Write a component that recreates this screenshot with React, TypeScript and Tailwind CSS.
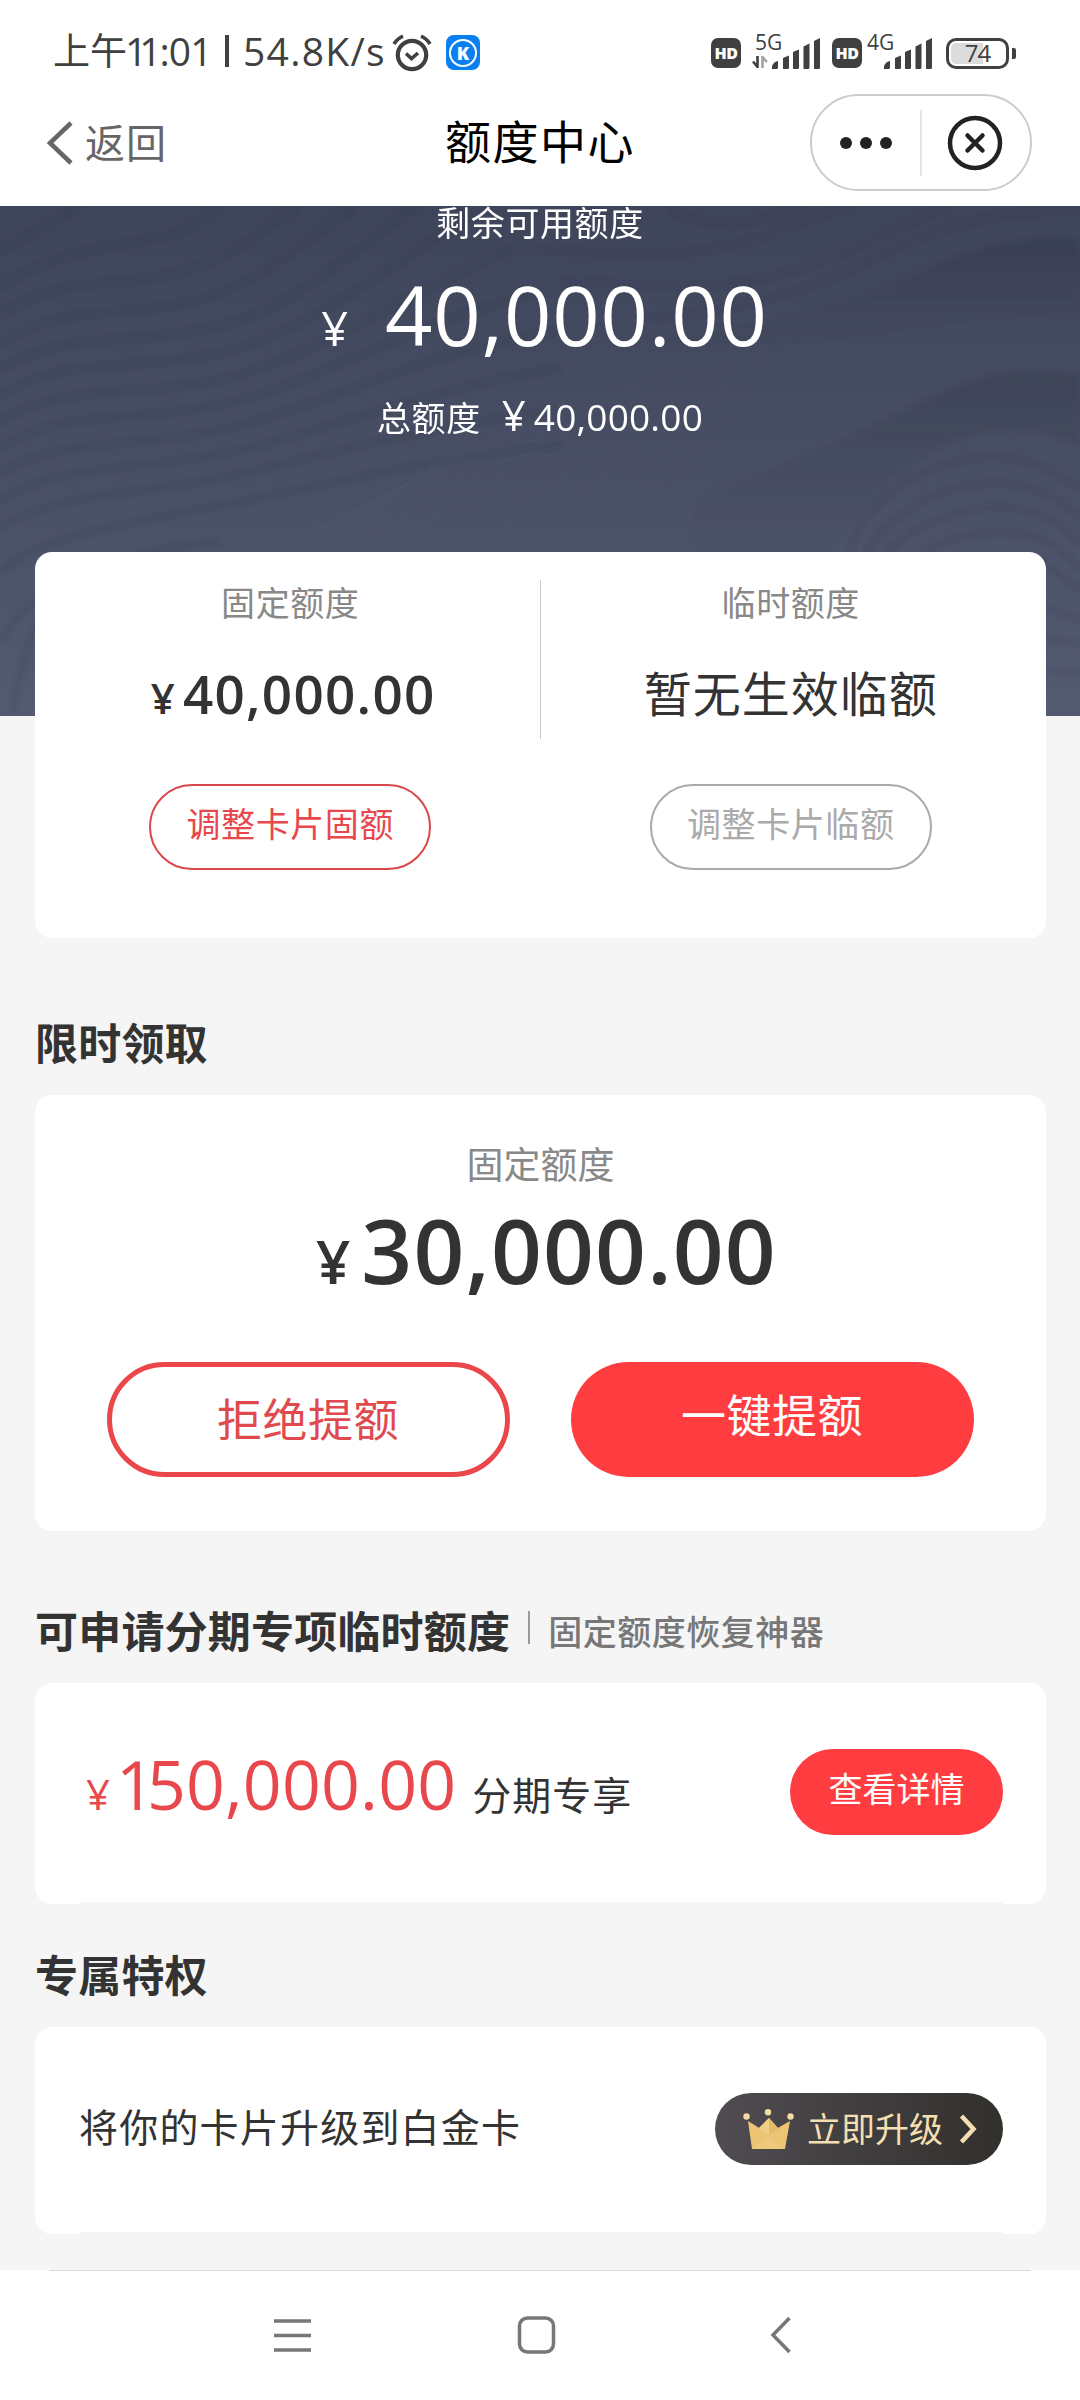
import type { ReactNode } from "react";
import clsx from "clsx";

const leftWaves = [
  "M0 46 C30 26 55 18 78 0",
  "M0 81 C60 40 120 42 175 28 C195 22 205 12 214 0",
  "M0 109 C60 68 115 84 180 66 C235 50 265 24 298 0",
  "M0 137 C60 98 120 112 190 96 C260 80 300 38 354 0",
  "M0 164 C60 124 130 140 210 122 C290 106 340 54 417 0",
  "M0 190 C60 150 130 166 215 148 C300 130 370 74 470 10",
  "M0 216 C60 176 130 192 220 174 C310 154 390 94 510 44",
  "M0 242 C60 202 130 218 225 198 C320 176 400 120 540 86",
  "M0 268 C60 230 130 244 230 222 C330 198 410 150 560 124",
  "M0 294 C60 256 130 268 240 244 C340 222 420 184 560 162",
  "M0 322 C60 284 130 292 240 268 C340 246 430 218 560 204",
  "M0 366 C40 330 130 316 240 296 C340 276 430 252 560 240",
  "M0 436 C30 380 100 346 220 336",
  "M12 510 C20 450 40 400 70 370",
];

const rightWaves = [
  "M540 44 C620 46 700 58 780 24 C810 12 830 6 850 0",
  "M560 76 C640 76 720 92 810 60 C880 34 920 10 950 0",
  "M640 112 C740 108 820 82 900 40 C950 16 1000 6 1080 4",
  "M670 6 C710 22 760 20 800 0",
  "M850 346 C860 290 940 246 1005 252 C1045 256 1066 274 1080 284",
  "M866 346 C890 306 950 272 1010 278 C1046 282 1066 300 1080 312",
  "M886 346 C920 316 970 296 1015 302 C1050 308 1066 326 1080 338",
  "M920 346 C960 326 1000 322 1030 330 C1056 336 1070 352 1080 364",
  "M1040 356 L1080 384",
  "M1040 400 L1080 414",
  "M1040 432 L1080 438",
  "M1040 464 L1080 466",
];

const fineWaves = Array.from({ length: 15 }, (_, i) => i);

function HeroWaves() {
  return (
    <svg className="absolute inset-0 h-full w-full" viewBox="0 0 1080 510" fill="none">
      <defs>
        <linearGradient id="ridge" x1="0" y1="0" x2="0" y2="1">
          <stop offset="0" stopColor="#363c50" stopOpacity="0.7" />
          <stop offset="1" stopColor="#3f4559" stopOpacity="0" />
        </linearGradient>
        <filter id="soft" x="-5%" y="-5%" width="110%" height="110%">
          <feGaussianBlur stdDeviation="2" />
        </filter>
      </defs>
      <g filter="url(#soft)">
        <path
          d="M640 136 C760 128 860 94 950 54 C1000 34 1040 32 1080 35 V110 C980 90 860 150 640 136Z"
          fill="url(#ridge)"
        />
        <path
          d="M700 292 C800 260 900 206 960 180 C1010 160 1050 166 1080 170 V240 C980 190 880 260 830 346 H690Z"
          fill="url(#ridge)"
          opacity="0.6"
        />
      </g>
      <g filter="url(#soft)" strokeWidth="4">
        {leftWaves.map((d) => (
          <path key={d} d={d} stroke="#343b50" strokeOpacity="0.26" />
        ))}
        {rightWaves.map((d) => (
          <path key={d} d={d} stroke="#383e55" strokeOpacity="0.2" />
        ))}
      </g>
      {fineWaves.map((i) => (
        <path
          key={i}
          d={`M${250 + i * 9} ${346 - i * 3} C${400 + i * 8} ${330 - i * 10} ${480 + i * 8} ${290 - i * 7} ${700 + i * 5} ${270 - i * 9}`}
          stroke="#6a7093"
          strokeOpacity="0.08"
          strokeWidth="1.5"
        />
      ))}
    </svg>
  );
}

function AlarmIcon() {
  return (
    <svg className="h-[38px] w-[40px]" viewBox="0 0 40 38" fill="none" stroke="#404040">
      <circle cx="20" cy="21" r="14.2" strokeWidth="4.2" />
      <path d="M14 19.5 L19.5 24.5 L26 19" strokeWidth="3.6" />
      <path d="M2 10 Q5.5 4.5 11 2.2 M38 10 Q34.5 4.5 29 2.2" strokeWidth="3.6" />
    </svg>
  );
}

function SignalBars() {
  return (
    <svg className="h-[31px] w-[48px]" viewBox="0 0 48 31" fill="#404040">
      <path d="M0 31 V28 Q2 23.5 6 23 V29.5 Q6 31 4.5 31Z" />
      <path d="M11 31 V20 L17 17.5 V29.5 Q17 31 15.5 31Z" />
      <path d="M21 31 V14 L27 11.5 V29.5 Q27 31 25.5 31Z" />
      <path d="M31.5 31 V8.5 L37.5 5.5 V29.5 Q37.5 31 36 31Z" />
      <path d="M42 31 V3 L48 0 V29.5 Q48 31 46.5 31Z" />
    </svg>
  );
}

function HdBadge() {
  return (
    <span className="flex h-[30px] w-[30px] items-center justify-center rounded-[7px] bg-[#404040] text-[16px] leading-none font-extrabold tracking-tight text-white">
      HD
    </span>
  );
}

function StatusBar() {
  return (
    <div className="flex h-[95px] items-start pt-[31px] pl-[53px] text-[#404040]">
      <div className="flex h-10 w-[337px] shrink-0 items-center text-[39px] leading-10 font-medium whitespace-nowrap">
        <span className="shrink-0 text-[37px] font-normal">上午</span>
        <span className="-ml-[2px] shrink-0 tracking-[-8px]">11</span>
        <span className="ml-[6px] shrink-0 tracking-[-1px]">:01</span>
        <span className="absolute top-[35px] left-[225px] h-[32px] w-[4px] bg-[#404040]" />
        <span className="absolute left-[243px] tracking-[1.3px]">54.8K/s</span>
      </div>
      <div className="mt-[3px] ml-[2px] shrink-0">
        <AlarmIcon />
      </div>
      <div className="mt-[4px] ml-[14px] flex h-[35px] w-[34px] shrink-0 items-center justify-center rounded-[8px] bg-[#0a7ff0]">
        <span className="flex h-[28px] w-[28px] items-center justify-center rounded-full border-2 border-white text-[18px] leading-none font-extrabold text-white">
          K
        </span>
      </div>
      <div className="mt-[7px] ml-[231px] flex shrink-0">
        <HdBadge />
        <div className="relative ml-[31px]">
          <SignalBars />
          <span className="absolute -top-[4px] -left-[17px] text-[21px] leading-[16px]">5G</span>
          <svg className="absolute top-[18px] -left-[20px] h-[12px] w-[16px]" viewBox="0 0 16 12" fill="none" strokeWidth="2.6">
            <path d="M5.5 0 V11 L1 5.5" stroke="#404040" />
            <path d="M10.5 12 V1 L15 6" stroke="#a3a3a3" />
          </svg>
        </div>
        <div className="ml-[12px]">
          <HdBadge />
        </div>
        <div className="relative ml-[22px]">
          <SignalBars />
          <span className="absolute -top-[4px] -left-[17px] text-[21px] leading-[16px]">4G</span>
        </div>
        <div className="ml-[14px] flex items-center">
          <div className="flex h-[31px] w-[63px] rounded-[10px] border-[3.5px] border-[#404040] p-[2px]">
            <div className="flex w-full items-center justify-center rounded-[5px] bg-linear-to-r from-[#dcdcdc] from-60% to-white to-60% pb-px text-[24px] leading-none font-medium tracking-[-1px]">
              74
            </div>
          </div>
          <span className="ml-[3px] h-[11px] w-[4px] rounded-r-[2px] bg-[#404040]" />
        </div>
      </div>
    </div>
  );
}

function TitleBar() {
  return (
    <div className="grid h-[111px] grid-cols-3 items-start">
      <div className="flex h-[95px] items-center pl-[46px] text-[40px] tracking-[1px] text-[#666]">
        <svg className="mr-[12px] h-[44px] w-[27px]" viewBox="0 0 27 44" fill="none" stroke="#666" strokeWidth="4.5">
          <path d="M25 2 L4 22 L25 42" />
        </svg>
        返回
      </div>
      <h1 className="h-[95px] text-center text-[46px] leading-[93px] tracking-[1.5px] text-black">额度中心</h1>
      <div className="-mt-px mr-[48px] flex h-[97px] w-[222px] items-center justify-self-end rounded-full border-2 border-[#ccc]">
        <div className="flex w-[108px] justify-center gap-[8px]">
          <span className="h-[12px] w-[12px] rounded-full bg-[#222]" />
          <span className="h-[12px] w-[12px] rounded-full bg-[#222]" />
          <span className="h-[12px] w-[12px] rounded-full bg-[#222]" />
        </div>
        <span className="h-[66px] w-[2px] bg-[#e5e5e5]" />
        <svg className="ml-[25px] h-[56px] w-[56px]" viewBox="0 0 56 56" fill="none" stroke="#222" strokeWidth="4.5">
          <circle cx="28" cy="28" r="25" />
          <path d="M20.5 20.5 L35.5 35.5 M35.5 20.5 L20.5 35.5" strokeLinecap="round" />
        </svg>
      </div>
    </div>
  );
}

function SectionTitle({ className, children }: { className: string; children: ReactNode }) {
  return (
    <h2
      className={clsx(
        "mb-[21px] ml-[35px] flex h-[60px] items-center text-[43px] leading-[60px] font-bold tracking-[0.2px] text-[#333]",
        className
      )}
    >
      {children}
    </h2>
  );
}

function Card({ className, children }: { className: string; children: ReactNode }) {
  return <section className={clsx("relative mr-[34px] ml-[35px] rounded-[17px] bg-white", className)}>{children}</section>;
}

// Hairline along the bottom edge of the list style cards
function CardRule() {
  return <span className="absolute right-[44px] bottom-0 left-[44px] h-[2px] bg-[#f5f5f5]" />;
}

function CrownIcon() {
  return (
    <svg className="h-[41px] w-[52px]" viewBox="0 0 52 41">
      <path d="M5 12 L16 19 L26 9 L35 19 L47 12 L42 40 H9Z" fill="#ecc473" />
      <path d="M26 9 L26 26 L5 12 L16 19Z" fill="#f0cf88" />
      <path d="M26 26 L47 12 L35 19 L26 9Z" fill="#e6ba68" />
      <path d="M26 26 L42 40 H9Z" fill="#eec97d" />
      <circle cx="3.5" cy="7.5" r="3.2" fill="#f3dda3" />
      <circle cx="25" cy="3.3" r="3.2" fill="#f3dda3" />
      <circle cx="47.5" cy="7.5" r="3.2" fill="#f3dda3" />
    </svg>
  );
}

const columns = [
  { label: "固定额度", amount: "40,000.00", action: "调整卡片固额", active: true },
  { label: "临时额度", amount: "", action: "调整卡片临额", active: false },
];

export default function App() {
  return (
    <main className="flex h-[2400px] w-[1080px] flex-col overflow-hidden bg-[#f5f5f5] font-['Open_Sans','Noto_Sans_CJK_SC',sans-serif]">
      <header className="relative bg-white">
        <StatusBar />
        <TitleBar />
      </header>

      <div className="relative h-[510px] bg-linear-to-b from-[#3e4459] via-[#474d62] via-45% to-[#545b71] text-white">
        <HeroWaves />
        <div className="relative flex flex-col items-center">
          <p className="text-[34px] leading-[35px] tracking-[0.6px]">剩余可用额度</p>
          <p className="mt-[28px] ml-[9px] flex h-[90px] items-baseline gap-[37px] leading-[90px]">
            <span className="text-[47px]">¥</span>
            <span className="text-[83px] font-medium tracking-[0.8px]">40,000.00</span>
          </p>
          <p className="mt-[36px] flex h-[40px] items-baseline leading-[40px]">
            <span className="text-[34px] tracking-[0.6px]">总额度</span>
            <span className="ml-[21px] text-[42px]">¥</span>
            <span className="ml-[8px] text-[37px] tracking-[0.2px]">40,000.00</span>
          </p>
        </div>
      </div>

      <Card className="-mt-[164px] flex h-[386px]">
        {columns.map((col, i) => (
          <div
            key={col.label}
            className={clsx("flex flex-1 flex-col items-center pt-[34px]", i === 0 ? "pl-[5px]" : "pr-[5px]")}
          >
            <p className="text-[34px] leading-[34px] tracking-[0.6px] text-[#888]">{col.label}</p>
            <div className="mt-[44px] h-[60px] leading-[60px] text-[#333]">
              {col.amount ? (
                <p className="ml-[6px] flex h-[60px] items-baseline gap-[8px] font-semibold">
                  <span className="text-[42px]">¥</span>
                  <span className="text-[53px] tracking-[1.3px]">{col.amount}</span>
                </p>
              ) : (
                <p className="text-[48px] tracking-[1px]">暂无生效临额</p>
              )}
            </div>
            <button
              className={clsx(
                "mt-[60px] h-[86px] w-[282px] rounded-full border-2 pb-[5px] text-[34px] tracking-[0.6px]",
                col.active ? "border-[#d9484b] text-[#e8474b]" : "border-[#aaa] text-[#aaa]"
              )}
            >
              {col.action}
            </button>
          </div>
        ))}
        <span className="absolute top-[28px] left-[505px] h-[159px] w-px bg-[#ccc]" />
      </Card>

      <SectionTitle className="mt-[76px]">限时领取</SectionTitle>
      <Card className="flex h-[436px] flex-col items-center pt-[52px]">
        <p className="text-[37px] leading-[36px] text-[#888]">固定额度</p>
        <p className="mt-[22px] ml-[12px] flex h-[90px] items-baseline gap-[11px] leading-[90px] font-semibold text-[#333]">
          <span className="text-[60px]">¥</span>
          <span className="text-[89px] tracking-[1.2px]">30,000.00</span>
        </p>
        <div className="mt-[67px] flex gap-[61px] pr-px text-[45px] tracking-[0.5px]">
          <button className="h-[115px] w-[403px] rounded-full border-[5px] border-[#eb464a] text-[#e04a4e]">
            拒绝提额
          </button>
          <button className="h-[115px] w-[403px] rounded-full bg-[#ff3d40] pb-[8px] text-white">
            一键提额
          </button>
        </div>
      </Card>

      <SectionTitle className="mt-[71px]">
        可申请分期专项临时额度
        <span className="mb-[10px] ml-[18px] h-[33px] w-[2px] bg-[#999]" />
        <span className="ml-[18px] text-[34px] font-medium tracking-[0.5px] text-[#777]">固定额度恢复神器</span>
      </SectionTitle>
      <Card className="flex h-[221px] items-center justify-between pr-[43px] pl-[51px]">
        <p className="mb-[20px] flex h-[80px] items-baseline leading-[80px]">
          <span className="text-[42px] text-[#e8474b]">¥</span>
          <span className="ml-[6px] text-[68px] tracking-[0.2px] text-[#e8474b]">
            <span className="tracking-[-8px]">1</span>50,000.00
          </span>
          <span className="ml-[16px] text-[39px] tracking-[1px] text-[#333]">分期专享</span>
        </p>
        <button className="mb-[3px] h-[86px] w-[213px] rounded-full bg-[#ff3d40] pb-[5px] text-[34px] text-white">
          查看详情
        </button>
        <CardRule />
      </Card>

      <SectionTitle className="mt-[42px]">专属特权</SectionTitle>
      <Card className="flex h-[207px] items-start justify-between pt-[66px] pr-[43px] pl-[44px]">
        <p className="text-[39px] leading-[68px] tracking-[1.2px] text-[#333]">将你的卡片升级到白金卡</p>
        <button className="flex h-[72px] w-[288px] items-center rounded-full bg-linear-to-r from-[#504c52] to-[#32302d] pl-[28px] text-[34px] leading-[72px] text-[#f5dfb0]">
          <CrownIcon />
          <span className="ml-[12px]">立即升级</span>
          <svg className="ml-[16px] h-[30px] w-[18px]" viewBox="0 0 18 30" fill="none" stroke="#f5dfb0" strokeWidth="4.5">
            <path d="M2.5 2 L14.5 15 L2.5 28" />
          </svg>
        </button>
        <CardRule />
      </Card>

      <nav className="mt-auto h-[130px] bg-white">
        <div className="mx-[49px] h-px bg-[#ddd]" />
        <div className="flex pt-[44px] pl-[273px]">
          <svg className="h-[40px] w-[40px]" viewBox="0 0 40 40" stroke="#777" strokeWidth="3.5">
            <path d="M1 6 H38 M1 20.5 H38 M1 35 H38" />
          </svg>
          <svg className="ml-[203px] h-[40px] w-[40px]" viewBox="0 0 40 40" fill="none" stroke="#777" strokeWidth="3.5">
            <rect x="3.5" y="3" width="34" height="34" rx="8" />
          </svg>
          <svg className="ml-[213px] h-[40px] w-[24px]" viewBox="0 0 24 40" fill="none" stroke="#777" strokeWidth="3.5">
            <path d="M20.5 3 L4 20 L20.5 37" />
          </svg>
        </div>
      </nav>
    </main>
  );
}
